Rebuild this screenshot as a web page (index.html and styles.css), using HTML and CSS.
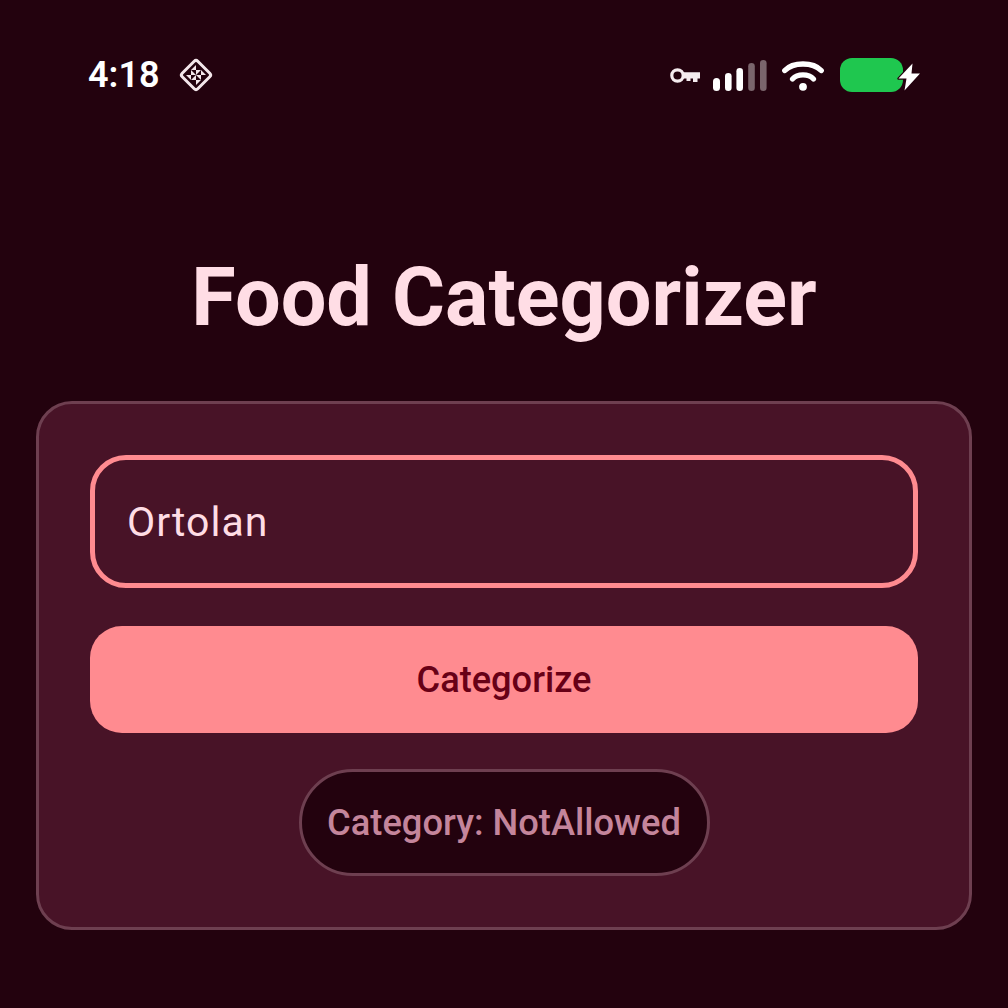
FILE: index.html
```html
<!DOCTYPE html>
<html lang="en">
<head>
<meta charset="utf-8">
<title>Food Categorizer</title>
<link rel="stylesheet" href="styles.css">
</head>
<body>
<div class="screen">
  <header class="status">
    <div class="status-left">
      <span class="time">4:18</span>
      <svg class="diamond" viewBox="0 0 36 36" width="36" height="36" fill="none">
        <rect x="7" y="7" width="22" height="22" rx="2.5" transform="rotate(45 18 18)" stroke="#f3e6ea" stroke-width="3"/>
        <g fill="#f3e6ea">
          <path d="M18 8 13 13H18Z"/>
          <path d="M18 8 13 13H18Z" transform="rotate(90 18 18)"/>
          <path d="M18 8 13 13H18Z" transform="rotate(180 18 18)"/>
          <path d="M18 8 13 13H18Z" transform="rotate(270 18 18)"/>
          <path d="M18 13 23 13 18 18Z"/>
          <path d="M18 13 23 13 18 18Z" transform="rotate(90 18 18)"/>
          <path d="M18 13 23 13 18 18Z" transform="rotate(180 18 18)"/>
          <path d="M18 13 23 13 18 18Z" transform="rotate(270 18 18)"/>
        </g>
      </svg>
    </div>
    <div class="status-right">
      <svg class="key" viewBox="0 0 30 16" width="30" height="16" fill="none">
        <circle cx="7.5" cy="7.5" r="5.7" stroke="#f5ecef" stroke-width="3.2"/>
        <path d="M12 4.2H30V10.5H27.5V14H23V10.5H20.5V13H16.5V10.5H12Z" fill="#f5ecef"/>
      </svg>
      <svg class="signal" viewBox="0 0 54 31" width="54" height="31">
        <rect class="on" x="0" y="18" width="7" height="13" rx="3.5"/>
        <rect class="on" x="12" y="13" width="6.6" height="18" rx="3.3"/>
        <rect class="on" x="23.4" y="8" width="6.6" height="23" rx="3.3"/>
        <rect class="off" x="35.2" y="3" width="6.6" height="28" rx="3.3"/>
        <rect class="off" x="47" y="0" width="6.6" height="31" rx="3.3"/>
      </svg>
      <svg class="wifi" viewBox="0 0 42 31" width="42" height="31" fill="none" stroke="#fff" stroke-linecap="round">
        <path d="M2.8 10.5C11 1.8 31 1.8 39.2 10.5" stroke-width="5.4"/>
        <path d="M10.5 19C15.5 13.5 26.5 13.5 31.5 19" stroke-width="5.2"/>
        <circle cx="21" cy="26.8" r="3.9" fill="#fff" stroke="none"/>
      </svg>
      <div class="battery-wrap">
        <div class="battery"></div>
        <svg class="bolt" viewBox="0 0 24 30" width="24" height="30">
          <path d="M15.5 1.5 1.5 16.5H9.5L7.5 28.5 23 11.5H14.5Z" fill="#fff" stroke="#23020e" stroke-width="2.4" stroke-linejoin="round" paint-order="stroke"/>
        </svg>
      </div>
    </div>
  </header>

  <h1 class="title">Food Categorizer</h1>

  <main class="card">
    <div class="field">Ortolan</div>
    <button class="action" type="button">Categorize</button>
    <div class="chip">Category: NotAllowed</div>
  </main>
</div>
</body>
</html>
```
FILE: styles.css
```css
* { box-sizing: border-box; }
html, body { margin: 0; height: 100%; }
body {
  background: #23020e;
  font-family: Roboto, "Liberation Sans", sans-serif;
  overflow: hidden;
}
.screen {
  width: 1008px;
  height: 1008px;
  padding: 52px 36px 0;
  display: flex;
  flex-direction: column;
}
.status {
  height: 46px;
  padding: 0 52px;
  display: flex;
  align-items: center;
  justify-content: space-between;
}
.status-left { display: flex; align-items: center; gap: 18px; }
.time { color: #fff; font-size: 36px; font-weight: 600; line-height: 46px; }
.diamond { display: block; }
.status-right { display: flex; align-items: center; }
.key { display: block; margin-right: 13px; margin-top: 1px; }
.signal { display: block; margin-right: 15px; }
.wifi { display: block; margin-right: 16px; }
.battery-wrap { position: relative; width: 80px; height: 34px; }
.battery { width: 63px; height: 34px; background: #1fc74f; border-radius: 12px; }
.bolt { position: absolute; left: 57px; top: 4px; }
.signal .on { fill: #fff; }
.signal .off { fill: #7a656c; }
.title {
  margin: 151px 0 0;
  height: 97px;
  color: #ffdde5;
  font-size: 81px;
  font-weight: 700;
  line-height: 97px;
  text-align: center;
}
.card {
  margin-top: 55px;
  height: 529px;
  padding: 51px;
  background: #481327;
  border: 3px solid #6e3f50;
  border-radius: 36px;
  display: flex;
  flex-direction: column;
  align-items: center;
}
.field {
  width: 100%;
  height: 133px;
  padding-left: 32px;
  display: flex;
  align-items: center;
  border: 5px solid #ff8b90;
  border-radius: 36px;
  color: #ffdde5;
  font-size: 41px;
  letter-spacing: 1px;
}
.action {
  width: 100%;
  height: 107px;
  margin-top: 38px;
  border: 0;
  border-radius: 32px;
  background: #ff8b90;
  color: #680016;
  font-family: inherit;
  font-size: 36.2px;
  font-weight: 500;
}
.chip {
  width: 411px;
  height: 107px;
  margin-top: 36px;
  display: flex;
  align-items: center;
  justify-content: center;
  background: #23020e;
  border: 3px solid #6e3f50;
  border-radius: 54px;
  color: #c4859b;
  font-size: 36.3px;
  font-weight: 500;
}
```
